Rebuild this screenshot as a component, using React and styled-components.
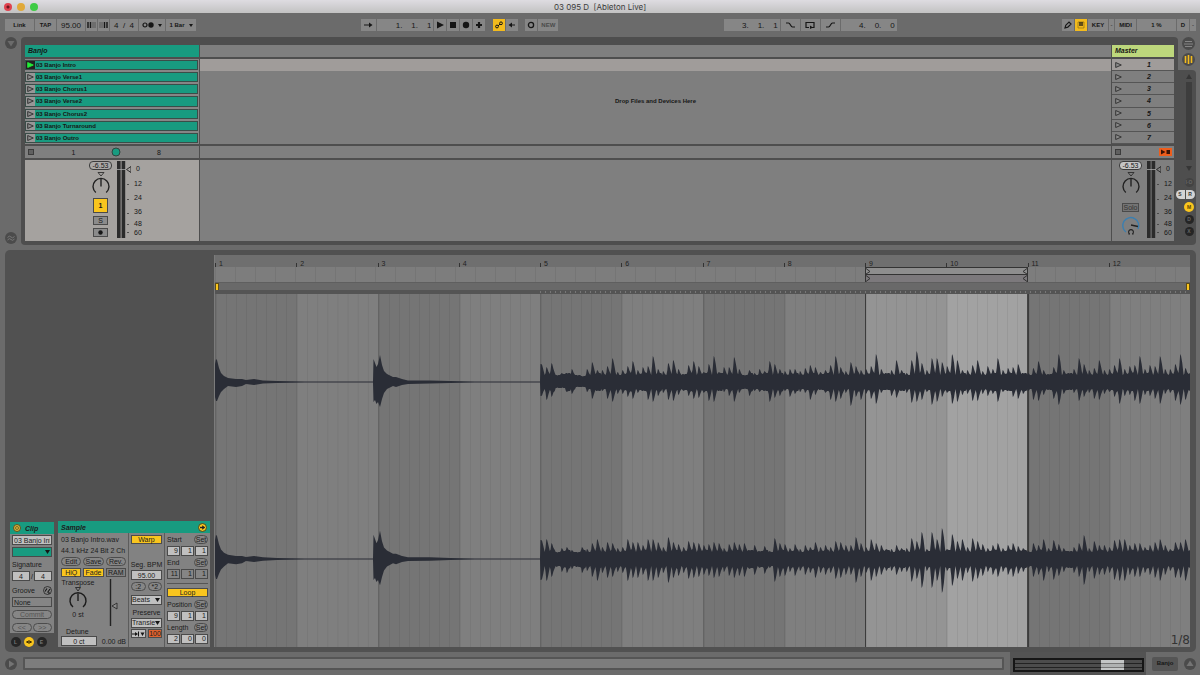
import React from "react";
import styled, { createGlobalStyle } from "styled-components";

const GlobalStyle = createGlobalStyle`
  * {
    box-sizing: border-box;
  }
  body {
    margin: 0;
    background: #6b6b6b;
    color: #161616;
    font-family: "Liberation Sans", Arial, sans-serif;
    font-size: 7px;
    line-height: 9px;
  }
  button,
  input,
  select {
    appearance: none;
    margin: 0;
    padding: 0;
    border: 0;
    border-radius: 0;
    color: inherit;
    font: inherit;
    outline: none;
  }
  svg {
    display: block;
    flex: none;
  }
`;

const Window = styled.div`
  min-height: 100vh;
  display: flex;
  flex-direction: column;
  overflow: hidden;
`;

/* ---------- title bar ---------- */

const StyledTitleBar = styled.header`
  display: grid;
  grid-template-columns: 1fr auto 1fr;
  align-items: center;
  height: 13px;
  padding: 0 4px;
  background: linear-gradient(#dedce1, #c2c2c2);
  h1 {
    margin: 0;
    font-family: Inter, sans-serif;
    font-size: 8px;
    font-weight: 400;
    line-height: 12px;
    color: #3b3b3b;
    white-space: pre;
  }
`;

const Lights = styled.div`
  display: flex;
  gap: 5px;
`;

const Light = styled.button`
  width: 8px;
  height: 8px;
  border-radius: 50%;
  background: ${(props) => props.$color};
  &:first-child {
    background: radial-gradient(circle, #6d1620 0 1px, #e0424f 2px);
  }
`;

const TitleBar = () => (
  <StyledTitleBar>
    <Lights>
      <Light $color="#e0424f" aria-label="Close" />
      <Light $color="#e0a93a" aria-label="Minimize" />
      <Light $color="#3fcb45" aria-label="Zoom" />
    </Lights>
    <h1>{"03 095 D  [Ableton Live]"}</h1>
  </StyledTitleBar>
);

/* ---------- control bar ---------- */

const StyledControlBar = styled.nav`
  display: flex;
  justify-content: space-between;
  align-items: center;
  height: 24px;
  padding: 0 4px 0 5px;
`;

const ControlGroup = styled.div`
  display: flex;
  gap: 1px;
`;

const ControlButton = styled.button`
  display: flex;
  align-items: center;
  justify-content: center;
  gap: 4px;
  width: ${(props) => props.$w || 12}px;
  height: 12px;
  margin-left: ${(props) => props.$gap || 0}px;
  background: ${(props) => (props.$on ? "#f3bb1d" : "#868686")};
  font-size: 6px;
  font-weight: 700;
  color: ${(props) => (props.$dim ? "#4a4a4a" : "#161616")};
`;

const ControlInput = styled.input`
  width: ${(props) => props.$w}px;
  height: 12px;
  padding: 0 ${(props) => (props.$right ? 2 : 0)}px;
  background: #868686;
  font-size: 8px;
  text-align: ${(props) => (props.$right ? "right" : "center")};
  white-space: pre;
`;

const Icon = ({ w = 9, h = 8, children }) => (
  <svg
    width={w}
    height={h}
    viewBox={`0 0 ${w} ${h}`}
    fill="none"
    stroke="#161616"
    strokeWidth="1"
  >
    {children}
  </svg>
);

const Down = () => (
  <Icon w={4} h={3}>
    <path d="M0 0h4L2 3z" fill="#161616" stroke="none" />
  </Icon>
);

const ControlBar = () => (
  <StyledControlBar>
    <ControlGroup>
      <ControlButton $w={29}>Link</ControlButton>
      <ControlButton $w={21}>TAP</ControlButton>
      <ControlInput $w={28} defaultValue="95.00" aria-label="Tempo" />
      <ControlButton $w={11} aria-label="Nudge down">
        <Icon>
          <path d="M1 1v6M3.5 1v6" strokeWidth="1.4" />
          <path d="M6 1v6M8 1v6" stroke="#4a4a4a" strokeWidth=".8" />
        </Icon>
      </ControlButton>
      <ControlButton $w={11} aria-label="Nudge up">
        <Icon>
          <path d="M5.5 1v6M8 1v6" strokeWidth="1.4" />
          <path d="M1 1v6M3 1v6" stroke="#4a4a4a" strokeWidth=".8" />
        </Icon>
      </ControlButton>
      <ControlInput $w={28} defaultValue="4  /  4" aria-label="Meter" />
      <ControlButton $w={26} aria-label="Metronome">
        <Icon w={12} h={6}>
          <circle cx="3" cy="3" r="2" strokeWidth="1.2" />
          <circle cx="9" cy="3" r="2.7" fill="#161616" stroke="none" />
        </Icon>
        <Down />
      </ControlButton>
      <ControlButton $w={30}>
        1 Bar
        <Down />
      </ControlButton>
    </ControlGroup>

    <ControlGroup>
      <ControlButton $w={15} aria-label="Follow">
        <Icon w={9} h={6}>
          <path d="M0 3h6" />
          <path d="M5 0.5L8.5 3 5 5.5z" fill="#161616" stroke="none" />
        </Icon>
      </ControlButton>
      <ControlInput
        $w={56}
        $right
        defaultValue="1.    1.    1"
        aria-label="Position"
      />
      <ControlButton aria-label="Play">
        <Icon w={8}>
          <path d="M1 0.5L8 4 1 7.5z" fill="#161616" stroke="none" />
        </Icon>
      </ControlButton>
      <ControlButton aria-label="Stop">
        <Icon w={8}>
          <path d="M1 1h6v6H1z" fill="#161616" stroke="none" />
        </Icon>
      </ControlButton>
      <ControlButton aria-label="Record">
        <Icon w={8}>
          <circle cx="4" cy="4" r="3.2" fill="#161616" stroke="none" />
        </Icon>
      </ControlButton>
      <ControlButton aria-label="Overdub">
        <Icon w={8}>
          <path d="M4 1v6M1 4h6" strokeWidth="2.2" />
        </Icon>
      </ControlButton>
      <ControlButton $on $gap={7} aria-label="Automation arm">
        <Icon w={8}>
          <circle cx="2" cy="5.5" r="1.4" />
          <circle cx="6" cy="2.3" r="1.4" />
          <path d="M3 5l2-2" />
        </Icon>
      </ControlButton>
      <ControlButton aria-label="Re-enable automation">
        <Icon w={8}>
          <path d="M3 4h4" />
          <path d="M0.5 4L4 1.5v5z" fill="#161616" stroke="none" />
        </Icon>
      </ControlButton>
      <ControlButton $gap={6} aria-label="Session record">
        <Icon w={8}>
          <circle cx="4" cy="4" r="2.6" strokeWidth="1.3" />
        </Icon>
      </ControlButton>
      <ControlButton $w={20} $dim>
        NEW
      </ControlButton>
    </ControlGroup>

    <ControlGroup>
      <ControlInput
        $w={56}
        $right
        defaultValue="3.    1.    1"
        aria-label="Loop start"
      />
      <ControlButton $w={19} aria-label="Punch in">
        <Icon w={11} h={6}>
          <path d="M1 1h2.5q1 0 2 2t2 2H10" strokeWidth="1.2" />
        </Icon>
      </ControlButton>
      <ControlButton $w={19} aria-label="Loop">
        <Icon w={10} h={7}>
          <path d="M4 5.5H1v-5h8v5H7" strokeWidth="1.2" />
          <path d="M5 3.5l3 2-3 1.5z" fill="#161616" stroke="none" />
        </Icon>
      </ControlButton>
      <ControlButton $w={19} aria-label="Punch out">
        <Icon w={11} h={6}>
          <path d="M1 5h2.5q1 0 2-2t2-2H10" strokeWidth="1.2" />
        </Icon>
      </ControlButton>
      <ControlInput
        $w={56}
        $right
        defaultValue="4.    0.    0"
        aria-label="Loop length"
      />
    </ControlGroup>

    <ControlGroup>
      <ControlButton aria-label="Draw mode">
        <Icon w={8}>
          <path d="M1 7l.8-2.8L5 1l2 2-3.2 3.2z" strokeWidth="1.2" />
        </Icon>
      </ControlButton>
      <ControlButton $on aria-label="Computer keyboard">
        <Icon w={8}>
          <path d="M1 7h6V1H1z" strokeWidth=".6" stroke="#7d6112" />
          <path d="M3 1v4M5 1v4" strokeWidth="1.3" />
        </Icon>
      </ControlButton>
      <ControlButton $w={20}>KEY</ControlButton>
      <ControlButton $w={5} $dim aria-label="Key in">
        -
      </ControlButton>
      <ControlButton $w={21}>MIDI</ControlButton>
      <ControlButton $w={39}>1 %</ControlButton>
      <ControlButton $w={12}>D</ControlButton>
      <ControlButton $w={6} $dim aria-label="MIDI in">
        -
      </ControlButton>
    </ControlGroup>
  </StyledControlBar>
);

/* ---------- session view ---------- */

const StyledSession = styled.section`
  display: grid;
  grid-template-columns: 21px 1fr 18px;
  height: 208px;
  margin-right: 4px;
`;

const Rail = styled.div`
  display: flex;
  flex-direction: column;
  justify-content: space-between;
  align-items: center;
  padding: 0 0 1px;
`;

const RoundButton = styled.button`
  display: flex;
  align-items: center;
  justify-content: center;
  width: ${(props) => props.$size || 12}px;
  height: ${(props) => props.$size || 12}px;
  flex: none;
  border-radius: 50%;
  background: ${(props) => props.$bg || "#4b4b4b"};
  color: ${(props) => props.$fg || "#6b6b6b"};
  font-size: 5px;
  font-weight: 700;
  line-height: 5px;
`;

const Mixer = styled.main`
  display: grid;
  grid-template-columns: 174px 1fr 62px;
  grid-template-rows: 12px 85px 12px 81px;
  gap: 2px 1px;
  padding: 8px 4px 4px;
  border-radius: 4px 4px 0 4px;
  background: #4e4e4e;
`;

const TrackName = styled.h2`
  margin: 0;
  padding-left: 3px;
  background: ${(props) => props.$bg};
  font-size: 7px;
  font-style: italic;
  font-weight: 700;
  line-height: 12px;
`;

const Strip = styled.div`
  background: #7f7f7f;
`;

const ClipList = styled.ul`
  display: grid;
  grid-template-rows: repeat(7, 1fr);
  margin: 0;
  padding: 0;
  list-style: none;
  background: #868686;
`;

const Clip = styled.li`
  display: grid;
  grid-template-columns: 9px 1fr;
  gap: 1px;
  margin: 1px 1px 1px 0;
  border: 1px solid #3a4d48;
  background: #189b80;
  font-size: 6px;
  font-weight: 700;
  line-height: 8px;
`;

const Launch = styled.button`
  display: flex;
  align-items: center;
  justify-content: center;
  background: ${(props) => (props.$playing ? "#222" : "#979797")};
`;

const Triangle = ({ playing }) => (
  <svg width="7" height="6" viewBox="0 0 7 6">
    <path
      d="M0.7 0.5L6.3 3 0.7 5.5z"
      fill={playing ? "#22ee38" : "#8a8a8a"}
      stroke={playing ? "#22ee38" : "#2c2c2c"}
      strokeWidth=".9"
    />
  </svg>
);

const DropArea = styled.div`
  display: grid;
  grid-template-rows: 12px 1fr;
  background: #7e7e7e;
  &::before {
    content: "";
    background: #a09c9a;
  }
  p {
    margin: 0;
    padding-top: 26px;
    font-size: 6px;
    font-weight: 700;
    text-align: center;
  }
`;

const SceneList = styled.ul`
  display: grid;
  grid-template-rows: repeat(7, 1fr);
  margin: 0;
  padding: 0;
  list-style: none;
`;

const Scene = styled.li`
  display: grid;
  grid-template-columns: 12px 1fr;
  align-items: center;
  border-bottom: 1px solid #555;
  background: ${(props) => (props.$selected ? "#a09c9a" : "#7f7f7f")};
  font-size: 7px;
  font-style: italic;
  font-weight: 700;
  text-align: center;
  button {
    display: flex;
    justify-content: center;
    background: none;
  }
`;

const StopRow = styled.div`
  display: grid;
  grid-template-columns: ${(props) => props.$columns};
  align-items: center;
  justify-items: center;
  background: #7f7f7f;
`;

const StopButton = styled.button`
  width: 6px;
  height: 6px;
  border: 1px solid #3c3c3c;
  background: #606060;
`;

const StopAll = styled.button`
  display: flex;
  align-items: center;
  justify-content: center;
  width: 13px;
  height: 8px;
  background: #ee5d1c;
`;

const Channel = styled.div`
  display: flex;
  gap: 5px;
  padding: 1px 0 0 ${(props) => props.$indent}px;
  background: ${(props) => (props.$selected ? "#a5a29f" : "#7f7f7f")};
`;

const ChannelControls = styled.div`
  display: flex;
  flex-direction: column;
  align-items: center;
  width: 23px;
  input {
    width: 23px;
    height: 9px;
    margin-bottom: 2px;
    border: 1px solid #3c3c3c;
    border-radius: 4px;
    background: ${(props) => (props.$selected ? "#aaa8a6" : "#c4c4c4")};
    text-align: center;
  }
`;

const ChannelButton = styled.button`
  display: flex;
  align-items: center;
  justify-content: center;
  width: 15px;
  height: ${(props) => props.$h}px;
  margin-top: 3px;
  border: 1px solid #4a4a4a;
  background: ${(props) => props.$bg || "#8b8b8b"};
  font-weight: ${(props) => (props.$bg ? 700 : 400)};
`;

const SoloButton = styled.button`
  width: 17px;
  height: 9px;
  margin: 8px 0 3px;
  border: 1px solid #4a4a4a;
  background: #747474;
  line-height: 7px;
  color: #333;
`;

const Scale = styled.div`
  width: 10px;
  margin-left: -3px;
  text-align: center;
`;

const Tick = styled.div`
  height: ${(props) => props.$h}px;
  line-height: ${(props) => props.$h}px;
`;

const PanKnob = () => (
  <svg width="20" height="23" viewBox="0 0 20 23" fill="none" stroke="#222">
    <path d="M7 0.5h6L10 4z" strokeWidth=".8" />
    <path d="M4.8 20.5A8 8 0 1 1 15.2 20.5" strokeWidth="1.4" />
    <path d="M10 14.5V6.5" strokeWidth="1.4" />
  </svg>
);

const CueKnob = () => (
  <svg width="20" height="21" viewBox="0 0 20 21" fill="none">
    <path d="M5 17A8 8 0 1 1 17 14" stroke="#3b7fb0" strokeWidth="1.4" />
    <path d="M10 10l7 1.5" stroke="#222" strokeWidth="1.4" />
    <path
      d="M8.6 19a2.4 2.4 0 1 1 2.8 0M7.4 19h1.6M11 19h1.6"
      stroke="#222"
      strokeWidth="1.1"
    />
  </svg>
);

const Meter = () => (
  <svg width="14" height="78" viewBox="0 0 14 78">
    <path d="M0 0h3.6v77H0zM4.6 0h3.6v77H4.6z" fill="#2b2b2b" />
    <path d="M0 8.5h9" stroke="#aaa" strokeWidth=".8" />
    <path d="M9.5 8.5l4.5-3v6z" fill="none" stroke="#222" strokeWidth=".9" />
    <path
      d="M10 23.5h2M10 38.5h2M10 52.5h2M10 63.5h2M10 71.5h2"
      stroke="#3c3c3c"
      strokeWidth=".8"
    />
  </svg>
);

const ticks = [
  ["0", 15],
  ["12", 15],
  ["24", 14],
  ["36", 14],
  ["48", 9],
  ["60", 9],
];

const MixerChannel = ({ selected, indent, children }) => (
  <Channel $selected={selected} $indent={indent}>
    <ChannelControls $selected={selected}>
      <input defaultValue="-6.53" aria-label="Peak level" />
      <PanKnob />
      {children}
    </ChannelControls>
    <Meter />
    <Scale>
      {ticks.map(([label, height]) => (
        <Tick key={label} $h={height}>
          {label}
        </Tick>
      ))}
    </Scale>
  </Channel>
);

const Side = styled.aside`
  display: flex;
  flex-direction: column;
  align-items: flex-end;
`;

const SideTop = styled.div`
  display: flex;
  flex-direction: column;
  gap: 3px;
  align-items: center;
  width: 16px;
  height: 33px;
`;

const SideBody = styled.div`
  display: flex;
  flex: 1;
  flex-direction: column;
  align-items: center;
  width: 100%;
  padding: 4px 0 4px 4px;
  border-radius: 0 4px 4px 0;
  background: #4e4e4e;
`;

const ScrollTrack = styled.div`
  width: 6px;
  height: 78px;
  margin: 3px 0 6px;
  background: #3d3d3d;
`;

const Toggles = styled.div`
  display: flex;
  flex-direction: column;
  align-items: center;
  gap: 3px;
  margin-top: 7px;
`;

const Pair = styled.div`
  display: flex;
  gap: 1px;
  margin-left: -8px;
  button:first-child {
    border-radius: 5px 0 0 5px;
  }
  button:last-child {
    border-radius: 0 5px 5px 0;
  }
`;

const clips = [
  "03 Banjo Intro",
  "03 Banjo Verse1",
  "03 Banjo Chorus1",
  "03 Banjo Verse2",
  "03 Banjo Chorus2",
  "03 Banjo Turnaround",
  "03 Banjo Outro",
];

const Session = () => (
  <StyledSession>
    <Rail>
      <RoundButton aria-label="Show browser">
        <svg width="8" height="7" viewBox="0 0 8 7">
          <path d="M0.5 1h7L4 6.5z" fill="#6b6b6b" />
        </svg>
      </RoundButton>
      <RoundButton aria-label="Groove pool">
        <svg width="8" height="8" viewBox="0 0 8 8" fill="none" stroke="#777">
          <path d="M0.5 3.5q2-2.5 3.5-.5t3.5-.5M0.5 6q2-2.5 3.5-.5t3.5-.5" />
        </svg>
      </RoundButton>
    </Rail>
    <Mixer>
      <TrackName $bg="#189b80">Banjo</TrackName>
      <Strip />
      <TrackName $bg="#bdd77c">Master</TrackName>

      <ClipList>
        {clips.map((name, i) => (
          <Clip key={name}>
            <Launch $playing={i === 0} aria-label={`Launch ${name}`}>
              <Triangle playing={i === 0} />
            </Launch>
            {name}
          </Clip>
        ))}
      </ClipList>
      <DropArea>
        <p>Drop Files and Devices Here</p>
      </DropArea>
      <SceneList>
        {clips.map((name, i) => (
          <Scene key={name} $selected={i === 0}>
            <button aria-label={`Launch scene ${i + 1}`}>
              <Triangle />
            </button>
            <span>{i + 1}</span>
          </Scene>
        ))}
      </SceneList>

      <StopRow $columns="12px 73px 12px 74px">
        <StopButton aria-label="Stop track" />
        <span>1</span>
        <svg width="10" height="10" viewBox="0 0 10 10">
          <circle cx="5" cy="5" r="4" fill="#189b80" stroke="#31443f" />
        </svg>
        <span>8</span>
      </StopRow>
      <Strip />
      <StopRow $columns="12px 1fr 17px">
        <StopButton aria-label="Stop all" />
        <span />
        <StopAll aria-label="Back to arrangement">
          <svg width="11" height="6" viewBox="0 0 11 6">
            <path
              d="M1 0.5L5.5 3 1 5.5zM6.5 1h3.5v4H6.5z"
              fill="#3a1408"
            />
          </svg>
        </StopAll>
      </StopRow>

      <MixerChannel selected indent={64}>
        <ChannelButton $h={15} $bg="#f9c51e">
          1
        </ChannelButton>
        <ChannelButton $h={9}>S</ChannelButton>
        <ChannelButton $h={9} aria-label="Arm">
          <Icon w={5} h={5}>
            <circle cx="2.5" cy="2.5" r="2.2" fill="#161616" stroke="none" />
          </Icon>
        </ChannelButton>
      </MixerChannel>
      <Strip />
      <MixerChannel indent={7}>
        <SoloButton>Solo</SoloButton>
        <CueKnob />
      </MixerChannel>
    </Mixer>
    <Side>
      <SideTop>
        <RoundButton $size={13} aria-label="Arrangement view">
          <svg width="9" height="8" viewBox="0 0 9 8" stroke="#858585">
            <path d="M1 1.5h7M0 4h9M1 6.5h7" />
          </svg>
        </RoundButton>
        <RoundButton $size={13} aria-label="Session view">
          <svg width="9" height="9" viewBox="0 0 9 9" stroke="#f3bb1d">
            <path d="M1.5 1v7M4.5 0v9M7.5 1v7" strokeWidth="1.6" />
          </svg>
        </RoundButton>
      </SideTop>
      <SideBody>
        <svg width="6" height="5" viewBox="0 0 6 5">
          <path d="M0 5h6L3 0z" fill="#363636" />
        </svg>
        <ScrollTrack />
        <svg width="6" height="5" viewBox="0 0 6 5">
          <path d="M0 0h6L3 5z" fill="#363636" />
        </svg>
        <Toggles>
          <RoundButton $size={9} $bg="#434343" $fg="#666">
            I·O
          </RoundButton>
          <Pair>
            <RoundButton $size={9} $bg="#d4d4d4" $fg="#333">
              S
            </RoundButton>
            <RoundButton $size={9} $bg="#d4d4d4" $fg="#333">
              R
            </RoundButton>
          </Pair>
          <RoundButton $size={10} $bg="#f9c51e" $fg="#5a4300">
            M
          </RoundButton>
          <RoundButton $size={9} $bg="#252525" $fg="#666">
            D
          </RoundButton>
          <RoundButton $size={9} $bg="#252525" $fg="#666">
            X
          </RoundButton>
        </Toggles>
      </SideBody>
    </Side>
  </StyledSession>
);

/* ---------- clip detail ---------- */

const StyledDetail = styled.section`
  display: grid;
  grid-template-columns: 209px 1fr;
  flex: 1;
  margin: 5px 4px 0 5px;
  padding: 5px 6px 5px 0;
  border-radius: 5px;
  background: #515151;
`;

const ClipView = styled.div`
  display: grid;
  grid-template-columns: 44px 1fr;
  align-items: end;
  gap: 4px;
  padding: 0 4px 0 5px;
`;

const ClipColumn = styled.div`
  height: 125px;
`;

const Box = styled.div`
  min-width: 0;
  background: #828282;
  color: #1c1c1c;
`;

const BoxTitle = styled.h2`
  display: flex;
  align-items: center;
  justify-content: ${(props) => (props.$spread ? "space-between" : "start")};
  gap: 4px;
  height: 12px;
  margin: 0;
  padding: 0 3px;
  background: #189b80;
  font-size: 7px;
  font-style: italic;
  font-weight: 700;
`;

const Column = styled.div`
  display: flex;
  flex-direction: column;
  min-width: 0;
  padding: 0 2px;
  border-right: ${(props) => (props.$rule ? "1px solid #5c5c5c" : "0")};
`;

const Row = styled.div`
  display: flex;
  align-items: center;
  justify-content: ${(props) => props.$justify || "space-between"};
  gap: ${(props) => props.$gap || 1}px;
  height: ${(props) => props.$h || 12}px;
  margin-top: ${(props) => props.$top || 0}px;
  white-space: nowrap;
`;

const Field = styled.input`
  flex: 1;
  width: 100%;
  min-width: 0;
  height: 10px;
  padding: 0 1px;
  border: 1px solid #4a4a4a;
  background: ${(props) => (props.$dim ? "#858585" : "#c0c0c0")};
  text-align: ${(props) => props.$align || "center"};
`;

const StyledSelect = styled.div`
  display: grid;
  grid-template-columns: 1fr 6px;
  align-items: center;
  flex: 1;
  min-width: 0;
  height: 10px;
  border: 1px solid #4a4a4a;
  background: ${(props) => props.$bg || "#c0c0c0"};
  overflow: hidden;
  select {
    min-width: 0;
    height: 8px;
    background: transparent;
    line-height: 8px;
  }
`;

const Select = ({ label, value, bg }) => (
  <StyledSelect $bg={bg}>
    <select aria-label={label} defaultValue={value}>
      <option value={value}>{value}</option>
    </select>
    <svg width="5" height="4" viewBox="0 0 5 4">
      <path d="M0 0h5L2.5 4z" fill="#161616" />
    </svg>
  </StyledSelect>
);

const Pill = styled.button`
  flex: ${(props) => (props.$fit ? "none" : 1)};
  width: ${(props) => (props.$fit ? "14px" : "auto")};
  height: 9px;
  border: 1px solid #4c4c4c;
  border-radius: 5px;
  background: #868686;
  line-height: 7px;
  text-align: center;
  color: ${(props) => (props.$dim ? "#545454" : "#1c1c1c")};
`;

const Toggle = styled.button`
  flex: 1;
  height: 9px;
  border: 1px solid #4c4c4c;
  background: ${(props) => props.$bg || "#808080"};
  line-height: 7px;
`;

const Amber = styled(Toggle)`
  background: #f9c51e;
`;

const ViewButtons = styled.div`
  display: flex;
  justify-content: center;
  gap: 3px;
  padding: 4px 7px 0 0;
`;

const SampleBody = styled.div`
  display: grid;
  grid-template-columns: 70px 36px 1fr;
  height: 114px;
  padding-left: 1px;
`;

const TransposeArea = styled.div`
  display: grid;
  grid-template-columns: 34px 1fr;
  height: 50px;
  > div {
    display: flex;
    flex-direction: column;
    align-items: center;
  }
`;

const Rule = styled.hr`
  width: 100%;
  margin: 4px 0 3px;
  border: 0;
  border-top: 1px solid #555;
`;

const DetuneLabel = styled.label`
  padding-left: 5px;
`;

const Gain = styled.span`
  padding-left: 4px;
`;

const BeatFields = ({ label, values, dim }) => (
  <Row $h={11}>
    {values.map((value, i) => (
      <Field
        key={i}
        defaultValue={value}
        $dim={dim}
        $align="right"
        aria-label={`${label} ${i + 1}`}
      />
    ))}
  </Row>
);

const ClipBox = () => (
  <ClipColumn>
    <Box>
      <BoxTitle>
        <svg width="8" height="8" viewBox="0 0 8 8">
          <circle cx="4" cy="4" r="3.5" fill="#d8b53c" stroke="#5d5221" />
          <circle cx="4" cy="4" r="1.5" fill="none" stroke="#7d6b23" />
        </svg>
        Clip
      </BoxTitle>
      <Column>
        <Row>
          <Field
            $align="left"
            defaultValue="03 Banjo Intro"
            aria-label="Clip name"
          />
        </Row>
        <Row>
          <Select label="Clip color" value="" bg="#189b80" />
        </Row>
        <Row>Signature</Row>
        <Row>
          <Field defaultValue="4" aria-label="Signature numerator" />/
          <Field defaultValue="4" aria-label="Signature denominator" />
        </Row>
        <Row $top={2}>
          Groove
          <Icon w={9} h={9}>
            <circle cx="4.5" cy="4.5" r="4" strokeWidth=".7" />
            <path d="M2 5.5l2-3M4.5 6.5l2.5-3.5M5 7h2" strokeWidth="1.1" />
          </Icon>
        </Row>
        <Row>
          <Field
            $dim
            $align="left"
            defaultValue="None"
            aria-label="Groove name"
          />
        </Row>
        <Row>
          <Pill $dim>Commit</Pill>
        </Row>
        <Row $top={1}>
          <Pill $dim>&lt;&lt;</Pill>
          <Pill $dim>&gt;&gt;</Pill>
        </Row>
      </Column>
    </Box>
    <ViewButtons>
      <RoundButton $size={10} $bg="#262626" $fg="#777">
        L
      </RoundButton>
      <RoundButton $size={10} $bg="#f9c51e" aria-label="Sample view">
        <svg width="6" height="4" viewBox="0 0 6 4">
          <path d="M0 2h6M1.5 1v2M3 0v4M4.5 1v2" stroke="#3f2f00" />
        </svg>
      </RoundButton>
      <RoundButton $size={10} $bg="#262626" $fg="#777">
        E
      </RoundButton>
    </ViewButtons>
  </ClipColumn>
);

const SampleBox = () => (
  <Box>
    <BoxTitle $spread>
      Sample
      <svg width="9" height="9" viewBox="0 0 9 9">
        <circle cx="4.5" cy="4.5" r="4" fill="#f9c51e" stroke="#3f4a20" />
        <path d="M2 4.5h3" stroke="#222" strokeWidth="1.4" />
        <path d="M4.2 2.2L7.3 4.5 4.2 6.8z" fill="#222" />
      </svg>
    </BoxTitle>
    <SampleBody>
      <Column $rule>
        <Row $justify="start">03 Banjo Intro.wav</Row>
        <Row $h={10} $justify="start">
          44.1 kHz 24 Bit 2 Ch
        </Row>
        <Row $gap={2}>
          <Pill>Edit</Pill>
          <Pill>Save</Pill>
          <Pill>Rev.</Pill>
        </Row>
        <Row $gap={2} $h={11}>
          <Amber>HiQ</Amber>
          <Amber>Fade</Amber>
          <Toggle>RAM</Toggle>
        </Row>
        <TransposeArea>
          <div>
            <span>Transpose</span>
            <svg
              width="20"
              height="23"
              viewBox="0 0 20 23"
              fill="none"
              stroke="#1c1c1c"
            >
              <path d="M7.5 0.5h5L10 4z" strokeWidth=".8" />
              <path d="M5 20A8 8 0 1 1 15 20" strokeWidth="1.4" />
              <path d="M10 14V6.5" strokeWidth="1.4" />
            </svg>
            <span>0 st</span>
          </div>
          <div>
            <svg width="14" height="49" viewBox="0 0 14 49">
              <path d="M6.500 1v47" stroke="#222" strokeWidth="1.4" />
              <path
                d="M8 28l5-3v6z"
                fill="#8c8c8c"
                stroke="#222"
                strokeWidth=".8"
              />
            </svg>
          </div>
        </TransposeArea>
        <Row $h={7} $justify="start">
          <DetuneLabel htmlFor="detune">Detune</DetuneLabel>
        </Row>
        <Row>
          <Field id="detune" defaultValue="0 ct" />
          <Gain>0.00 dB</Gain>
        </Row>
      </Column>
      <Column $rule>
        <Row>
          <Amber>Warp</Amber>
        </Row>
        <Row $top={13} $justify="center">
          Seg. BPM
        </Row>
        <Row $h={10}>
          <Field defaultValue="95.00" aria-label="Segment BPM" />
        </Row>
        <Row $gap={2}>
          <Pill>:2</Pill>
          <Pill>*2</Pill>
        </Row>
        <Row $top={2}>
          <Select label="Warp mode" value="Beats" />
        </Row>
        <Row $justify="center">Preserve</Row>
        <Row $h={10}>
          <Select label="Preserve" value="Transients" />
        </Row>
        <Row $gap={2} $h={11}>
          <Toggle $bg="#c0c0c0" aria-label="Transient loop mode">
            <Icon w={13} h={6}>
              <path d="M0 3h4M6.5 0.5v5" />
              <path
                d="M3 1l3 2-3 2zM8.5 1.5h4L10.5 5z"
                fill="#161616"
                stroke="none"
              />
            </Icon>
          </Toggle>
          <Toggle $bg="#e0622f">100</Toggle>
        </Row>
      </Column>
      <Column>
        <Row>
          Start
          <Pill $fit>Set</Pill>
        </Row>
        <BeatFields label="Start" values={["9", "1", "1"]} />
        <Row>
          End
          <Pill $fit>Set</Pill>
        </Row>
        <BeatFields dim label="End" values={["11", "1", "1"]} />
        <Rule />
        <Row $h={11}>
          <Amber>Loop</Amber>
        </Row>
        <Row>
          Position
          <Pill $fit>Set</Pill>
        </Row>
        <BeatFields label="Position" values={["9", "1", "1"]} />
        <Row>
          Length
          <Pill $fit>Set</Pill>
        </Row>
        <BeatFields label="Length" values={["2", "0", "0"]} />
      </Column>
    </SampleBody>
  </Box>
);

/* ---------- sample editor ---------- */

const StyledEditor = styled.div`
  display: grid;
  grid-template-rows: 12px 15px 8px 4px 1fr;
  position: relative;
  padding-left: 1px;
  background: #7b7b7b;
`;

const Ruler = styled.div`
  display: grid;
  grid-template-columns: repeat(12, 1fr);
  background: #6f6f6f;
  color: #1f1f1f;
  span {
    align-self: end;
    height: 4px;
    padding-left: 3px;
    border-left: 1px solid #333;
    line-height: 2px;
  }
`;

const BarGrid = styled.div`
  display: grid;
  grid-template-columns: repeat(12, 1fr);
`;

const LoopLane = styled.div`
  display: grid;
  grid-template-columns: repeat(12, 1fr);
  background: repeating-linear-gradient(
    90deg,
    rgba(0, 0, 0, 0.05) 0 1px,
    #7d7d7d 1px 20px
  );
`;

const Brace = styled.div`
  grid-column: 9 / 11;
  display: flex;
  justify-content: space-between;
  border-top: 1px solid #333;
  background: linear-gradient(#8e8e8e 0 6px, #333 6px 7px, #7c797c 7px);
`;

const MarkerLane = styled.div`
  display: flex;
  align-items: center;
  justify-content: space-between;
  border-top: 1px solid #5f5f5f;
  background: #696969;
`;

const Marker = styled.span`
  width: 4px;
  height: 8px;
  border: 1px solid #5d4b16;
  background: #f9c51e;
`;

const TransientLane = styled(BarGrid)`
  background: #545454;
  span {
    grid-column: 5 / 13;
    background: repeating-linear-gradient(90deg, #777 0 1px, #545454 1px 5px);
    height: 2px;
    margin-top: 1px;
  }
`;

const WaveArea = styled(BarGrid)`
  position: relative;
`;

const shades = {
  9: "#949494",
  10: "#a2a2a2",
};

const Bar = styled.div`
  border-left: 1px solid rgba(0, 0, 0, 0.14);
  border-right: ${(props) => (props.$bar === 10 ? "1px solid #444" : "0")};
  background:
    linear-gradient(90deg, rgba(0, 0, 0, 0.06) 1px, transparent 1px) 0 0 /
      12.5% 100%,
    ${(props) =>
      shades[props.$bar] || (props.$bar % 2 ? "#757575" : "#7f7f7f")};
`;

const LoopEdge = styled(Bar)`
  border-left: 1px solid #3c3c3c;
`;

const Wave = styled.svg`
  position: absolute;
  inset: 0;
  width: 100%;
  height: 100%;
`;

const GridLabel = styled.span`
  position: absolute;
  right: 0;
  bottom: 1px;
  font-family: "DejaVu Sans", sans-serif;
  font-size: 12px;
  line-height: 12px;
  color: #333;
`;

// one height per sixteenth note, starting at bar 5
const upperLeft = [
  18, 15, 19, 7, 9, 9, 13, 7, 6, 13, 20, 12, 12, 16, 24, 10, 12, 16, 21, 12, 15,
  16, 26, 13, 11, 19, 22, 13, 8, 17, 21, 16, 10, 18, 26, 10, 15, 15, 25, 13, 7,
  12, 9, 13, 11, 21, 18, 13, 11, 13, 13, 11, 14, 17, 15, 10, 12, 17, 26, 15, 11,
  20, 16, 12, 13, 16, 28, 13, 9, 12, 22, 12, 9, 22, 31, 19, 12, 24, 24, 20, 16,
  28, 22, 12, 12, 17, 22, 11, 16, 13, 24, 12, 14, 15, 18, 9, 9, 14, 21, 12, 8,
  15, 28, 12, 9, 13, 24, 18, 12, 14, 22, 12, 13, 17, 24, 13, 16, 17, 26, 13, 17,
  16, 26, 13, 13, 18, 28, 14,
];
const lowerLeft = [
  14, 18, 15, 6, 6, 10, 12, 5, 5, 10, 17, 9, 9, 17, 20, 12, 12, 15, 17, 11, 9,
  18, 20, 14, 11, 18, 19, 13, 9, 14, 17, 16, 11, 19, 20, 9, 10, 14, 20, 11, 7,
  14, 9, 10, 9, 20, 16, 14, 9, 15, 12, 10, 11, 18, 13, 8, 11, 18, 20, 17, 11,
  24, 15, 18, 12, 17, 22, 11, 8, 14, 16, 9, 11, 21, 20, 18, 10, 23, 20, 15, 11,
  22, 20, 13, 12, 19, 19, 12, 14, 12, 20, 10, 9, 15, 17, 12, 9, 18, 19, 13, 8,
  17, 23, 12, 8, 11, 19, 15, 11, 17, 18, 12, 10, 15, 22, 14, 13, 19, 22, 13, 14,
  17, 22, 12, 11, 19, 23, 18,
];
const upperRight = [
  19, 20, 16, 7, 11, 12, 9, 7, 12, 10, 16, 20, 12, 17, 16, 11, 12, 20, 17, 17,
  14, 20, 20, 17, 12, 22, 17, 15, 12, 18, 17, 16, 14, 15, 17, 16, 11, 15, 17,
  15, 16, 9, 14, 8, 13, 8, 21, 16, 15, 11, 15, 10, 14, 12, 17, 12, 14, 12, 18,
  17, 14, 14, 22, 16, 12, 20, 16, 14, 10, 10, 14, 11, 11, 21, 18, 27, 10, 27,
  20, 31, 10, 25, 18, 20, 12, 21, 18, 15, 11, 14, 16, 11, 14, 16, 13, 11, 8, 16,
  14, 20, 11, 19, 15, 11, 8, 12, 16, 24, 11, 18, 14, 14, 12, 19, 20, 20, 14, 16,
  16, 12, 14, 17, 20, 14, 10, 17, 17, 20,
];
const lowerRight = upperRight.map((h) => Math.round(h * 1.05) + 1);

// [x, height above, height below] for the two long decays in bars 1 to 4
const decays = [
  [0, 18, 15], [1, 23, 19], [2, 22, 19], [4, 14, 14], [6, 9, 10], [9, 6, 7],
  [13, 4, 4], [21, 3, 5], [27, 3, 4], [31, 2, 2], [39, 3, 3], [48, 1.6, 1.6],
  [62, 1, 1], [90, 0.5, 0.5], [158, 0.5, 0.5], [158.5, 23, 20], [160, 19, 18],
  [161.5, 15, 22], [163, 18, 20], [165, 27, 25], [167, 17, 17], [169, 11, 11],
  [172, 8, 7], [178, 5, 4], [181, 5, 5], [187, 3, 3], [193, 1.6, 2],
  [215, 1.6, 1.6], [235, 1, 1], [260, 0.5, 0.5], [325, 0.5, 0.5],
];

const outline = (heights, side, grow) => {
  const points = decays.map((p) => [p[0], p[side] * grow]);
  const step = 649 / heights.length;
  heights.forEach((h, i) => {
    const x = 325.5 + i * step;
    const base = Math.min(h, 7 + (i % 3));
    points.push([x, i === 0 ? h : Math.max(base, h * 0.6)]);
    points.push([x + 0.8, h]);
    points.push([x + 1.6, h * 0.94]);
    points.push([x + 2.8, Math.max(base, h * 0.7)]);
    points.push([x + 4.2, base]);
  });
  points.push([975, 9]);
  return points;
};

const wavePath = (center, upper, lower, grow) => {
  const top = outline(upper, 1, grow).map(([x, h]) => [x, center - h]);
  const bottom = outline(lower, 2, grow).map(([x, h]) => [x, center + h]);
  return (
    "M" +
    [...top, ...bottom.reverse()]
      .map(([x, y]) => `${x.toFixed(1)} ${y.toFixed(1)}`)
      .join("L") +
    "Z"
  );
};

const bars = [1, 2, 3, 4, 5, 6, 7, 8, 9, 10, 11, 12];

const Editor = () => (
  <StyledEditor>
    <Ruler>
      {bars.map((bar) => (
        <span key={bar}>{bar}</span>
      ))}
    </Ruler>
    <LoopLane>
      <Brace>
        <svg width="6" height="14" viewBox="0 0 6 14" fill="none" stroke="#333">
          <path d="M0.5 0v14M1 0.5L5 3.5 1 6M1 7.5l4 3L1 13.5" />
        </svg>
        <svg width="6" height="14" viewBox="0 0 6 14" fill="none" stroke="#333">
          <path d="M5.5 0v14M5 0.5L1 3.5 5 6M5 7.5l-4 3 4 3" />
        </svg>
      </Brace>
    </LoopLane>
    <MarkerLane>
      <Marker />
      <Marker />
    </MarkerLane>
    <TransientLane>
      <span />
    </TransientLane>
    <WaveArea>
      {bars.map((bar) =>
        bar === 9 || bar === 11 ? (
          <LoopEdge key={bar} $bar={bar} />
        ) : (
          <Bar key={bar} $bar={bar} />
        )
      )}
      <Wave viewBox="0 0 975 353" preserveAspectRatio="none" fill="#2a2d36">
        <path d={wavePath(88, upperLeft, lowerLeft, 1)} />
        <path d={wavePath(265, upperRight, lowerRight, 1.05)} />
      </Wave>
      <GridLabel>1/8</GridLabel>
    </WaveArea>
  </StyledEditor>
);

const Detail = () => (
  <StyledDetail>
    <ClipView>
      <ClipBox />
      <SampleBox />
    </ClipView>
    <Editor />
  </StyledDetail>
);

/* ---------- status bar ---------- */

const StyledStatus = styled.footer`
  display: grid;
  grid-template-columns: 12px 1fr 136px 26px 12px;
  align-items: center;
  gap: 6px;
  height: 23px;
  padding: 0 4px 0 5px;
`;

const StatusText = styled.div`
  height: 13px;
  border: 2px solid #555;
  border-radius: 1px;
  background: #7d7d7d;
`;

const OverviewTab = styled.div`
  align-self: stretch;
  padding: 6px 2px 3px 3px;
  background: #535353;
`;

const Overview = styled.div`
  display: grid;
  grid-template-columns: 86px 23px 1fr;
  height: 14px;
  border: 2px solid #161616;
  background: linear-gradient(
    #4c4c4c 0 3px,
    #222 3px 4px,
    #4c4c4c 4px 7px,
    #222 7px 8px,
    #4c4c4c 8px
  );
  span {
    grid-column: 2;
    background: linear-gradient(
      #c4c6c6 0 3px,
      #777 3px 4px,
      #b0b2b2 4px 7px,
      #777 7px 8px,
      #c4c6c6 8px
    );
  }
`;

const TrackButton = styled.button`
  height: 14px;
  border-radius: 2px;
  background: #555;
  font-size: 6px;
  font-weight: 700;
  color: #161616;
`;

const Status = () => (
  <StyledStatus>
    <RoundButton aria-label="Show help">
      <svg width="7" height="8" viewBox="0 0 7 8">
        <path d="M1 0.5L6.5 4 1 7.5z" fill="#747474" />
      </svg>
    </RoundButton>
    <StatusText />
    <OverviewTab>
      <Overview>
        <span />
      </Overview>
    </OverviewTab>
    <TrackButton>Banjo</TrackButton>
    <RoundButton aria-label="Hide detail view">
      <svg width="8" height="7" viewBox="0 0 8 7">
        <path d="M0.5 6h7L4 0.5z" fill="#747474" />
      </svg>
    </RoundButton>
  </StyledStatus>
);

const App = () => (
  <Window>
    <GlobalStyle />
    <TitleBar />
    <ControlBar />
    <Session />
    <Detail />
    <Status />
  </Window>
);

export default App;
